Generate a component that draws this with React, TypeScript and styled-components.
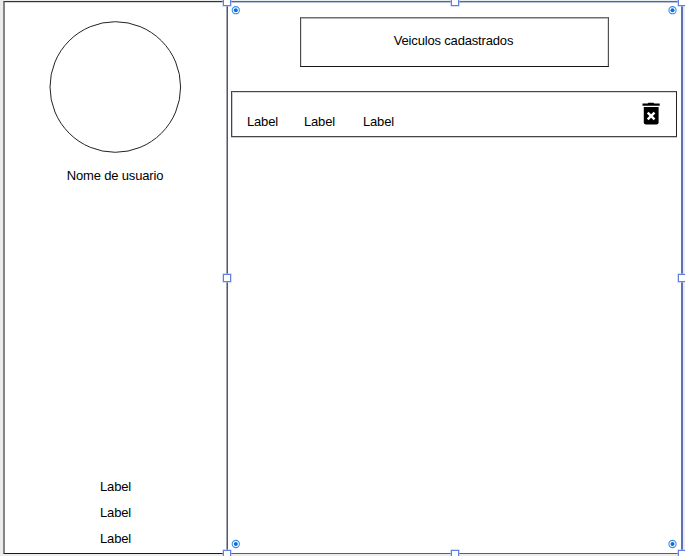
import React from "react";
import styled, { createGlobalStyle } from "styled-components";

const GlobalStyle = createGlobalStyle`
  * { box-sizing: border-box; }
  html, body { margin: 0; padding: 0; overflow: hidden; }
  body {
    background: #ebecec;
    font-family: "Liberation Sans", Arial, sans-serif;
    font-size: 13px;
    line-height: 16px;
    letter-spacing: -0.17px;
    color: #000;
  }
`;

const Canvas = styled.div`
  position: relative;
  display: grid;
  grid-template-columns: 223px 457px;
  width: 685px;
  height: 556px;
  padding: 1px 2px 2px 3px;
  overflow: hidden;
`;

const Sidebar = styled.aside`
  display: flex;
  flex-direction: column;
  align-items: center;
  background: #fff;
  border: solid;
  border-width: 1px 0 1px 2px;
  border-color: #333 transparent #18181a #858585;
  box-shadow: inset 0 1px 0 #d4d4d4;
  padding: 19px 0 6px;
`;

const Avatar = styled.svg`
  width: 133px;
  height: 133px;
  flex: none;
`;

const UserName = styled.div`
  margin: 14px 1px 0 0;
  white-space: nowrap;
`;

const Menu = styled.nav`
  display: flex;
  flex-direction: column;
  align-items: center;
  gap: 10px;
  margin-top: auto;
`;

const Main = styled.main`
  display: flex;
  flex-direction: column;
  background: #fff;
  border: solid;
  border-width: 1px 2px 1px 1px;
  border-color: #4868b4 #5d70b4 #3c5cb5 #a3a5b0;
  box-shadow: inset 1px 0 0 #3559b8, inset 0 1px 0 #b5c2d9;
  padding: 15px 5px 0 4px;
`;

const Title = styled.h1`
  width: 309px;
  height: 50px;
  margin: 0 0 0 69px;
  padding: 15px 2px 0 0;
  border: 1px solid;
  border-color: #707070 #505050 #151515 #4a4a4a;
  box-shadow: inset 0 1px 0 #b4b4b4, inset -1px 0 0 #ddd, inset 1px 0 0 #e0e0e0;
  font-size: 13px;
  font-weight: 400;
  text-align: center;
`;

const Vehicle = styled.section`
  display: flex;
  width: 446px;
  height: 46px;
  margin-top: 24px;
  padding: 22px 0 0 15px;
  border: 1px solid;
  border-color: #484848 #222 #444 #444;
  box-shadow: inset 0 1px 0 #d8d8d8, inset 1px 0 0 #ccc, 0 1px 0 #ccc;
`;

const Field = styled.span<{ $width: number }>`
  width: ${({ $width }) => $width}px;
`;

const Trash = styled.svg`
  width: 18px;
  height: 23px;
  margin: -12px 16px 0 auto;
  flex: none;
`;

const Handle = styled.i<{ $x: number; $y: number }>`
  position: absolute;
  left: ${({ $x }) => $x}px;
  top: ${({ $y }) => $y}px;
  width: 8px;
  height: 8px;
  border: 1px solid #5f81df;
  background: #fff;
  box-shadow: 0 0 0 0.5px #a9baf0;
`;

const Anchors = styled.svg`
  position: absolute;
  left: 0;
  top: 0;
  width: 685px;
  height: 556px;
`;

const handles = [
  [223, -2], [451, -2], [678, -2],
  [223, 274], [678, 274],
  [223, 550], [451, 550], [678, 550],
];

const anchors = [[235.8, 10.2], [672.5, 10.2], [235.8, 544], [672.5, 544]];

export default function App() {
  return (
    <Canvas>
      <GlobalStyle />
      <Sidebar>
        <Avatar viewBox="0 0 133 133">
          <circle cx="66.3" cy="66" r="65.3" fill="none" stroke="#222" />
        </Avatar>
        <UserName>Nome de usuario</UserName>
        <Menu>
          <span>Label</span>
          <span>Label</span>
          <span>Label</span>
        </Menu>
      </Sidebar>
      <Main>
        <Title>Veiculos cadastrados</Title>
        <Vehicle>
          <Field $width={57}>Label</Field>
          <Field $width={59}>Label</Field>
          <Field $width={40}>Label</Field>
          <Trash viewBox="0 0 18 23">
            <path d="M5.6 1.500 6.4.700h5l.8.800h5.500v2.200H.500V1.500z" />
            <path d="M1.800 5h14.800v15.200q0 2.200-2.200 2.200H4q-2.200 0-2.200-2.200z" />
            <path d="m5.700 10.600 6.800 6.800m0-6.800-6.800 6.800" fill="none" stroke="#fff" strokeWidth="2.400" />
          </Trash>
        </Vehicle>
      </Main>
      {handles.map(([x, y]) => (
        <Handle key={`${x}-${y}`} $x={x} $y={y} />
      ))}
      <Anchors viewBox="0 0 685 556">
        {anchors.map(([x, y]) => (
          <g key={`${x}-${y}`}>
            <circle cx={x} cy={y} r="3.600" fill="#fff" stroke="#3b8ee8" strokeWidth="1.100" />
            <circle cx={x} cy={y} r="2" fill="#0b6de0" />
          </g>
        ))}
      </Anchors>
    </Canvas>
  );
}
